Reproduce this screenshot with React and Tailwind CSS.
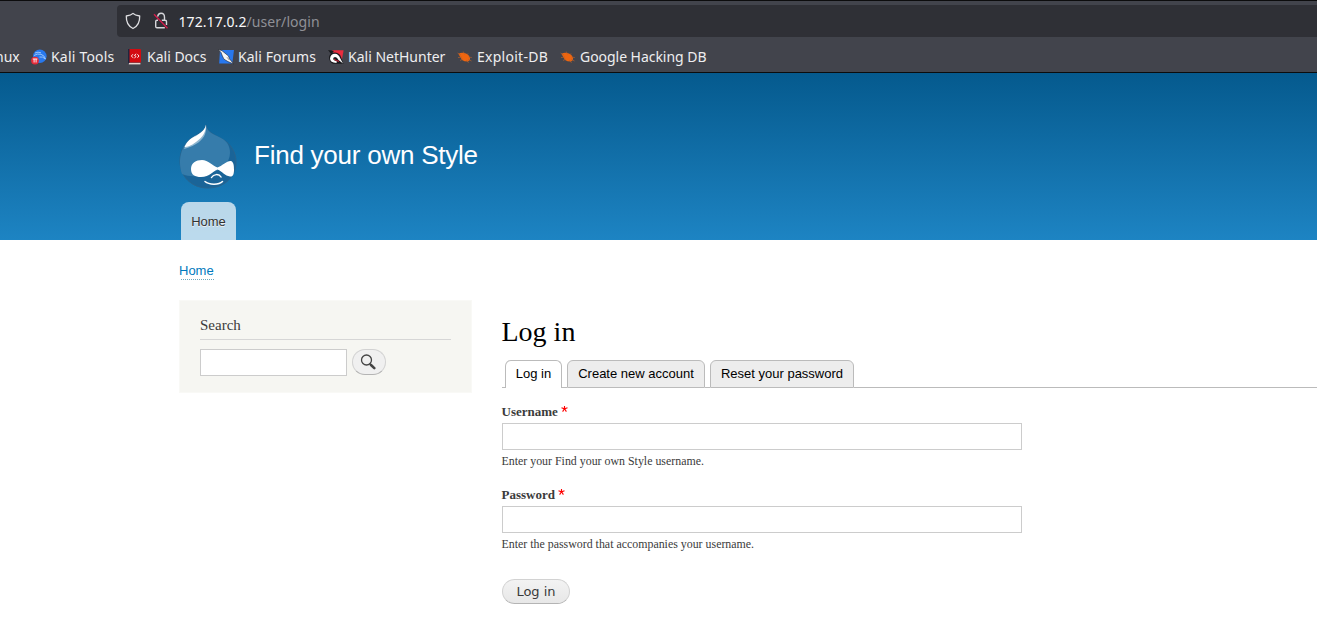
import React from "react";

function ShieldIcon() {
  return (
    <svg className="h-[18px] w-[16px]" viewBox="0 0 16 18" fill="none" stroke="#dfdfe2" strokeWidth="1.3" strokeLinejoin="round">
      <path d="M8 1.4 C6.4 3 3.7 3.6 1.3 4 C1.1 10 3.1 14.2 8 16.5 C12.9 14.2 14.9 10 14.7 4 C12.3 3.6 9.6 3 8 1.4Z" />
    </svg>
  );
}

function InsecureIcon() {
  return (
    <svg className="h-[18px] w-[16px]" viewBox="0 0 16 18" fill="none" strokeWidth="1.4">
      <path d="M4.6 4.6 C5 2.3 6.2 1.3 8 1.3 C10.3 1.3 11.5 2.7 11.5 5.3 V8.2 M8.8 8.2 H12.2 Q13.5 8.2 13.5 9.5 V13 M11.8 15.8 H4 Q2.7 15.8 2.7 14.5 V9.5 Q2.7 8.2 4 8.2 H5" stroke="#d6d6da" />
      <path d="M1 2.3 L14.5 16.3" stroke="#d81c4c" strokeWidth="1.3" />
    </svg>
  );
}

function ToolsIcon() {
  return (
    <svg className="h-4 w-4 shrink-0" viewBox="0 0 16 16">
      <circle cx="8.8" cy="7.3" r="6.8" fill="#2878ec" />
      <path d="M3 6.5 Q6 4.3 10 5.3 Q13.5 6.5 14.5 10 Q11.5 7.2 8.5 8 M4 4 Q7 2.5 10 3.8" fill="none" stroke="#a5ccfb" strokeWidth=".9" />
      <circle cx="4" cy="11.6" r="3.9" fill="#e52a38" />
      <path d="M1.8 10 H6.4 M3.1 10 V13.5 M5.1 10 V13.5" stroke="#fff" strokeWidth=".9" />
    </svg>
  );
}

function DocsIcon() {
  return (
    <svg className="h-4 w-4 shrink-0" viewBox="0 0 16 16">
      <path d="M1 0 H3 V15 H1Z" fill="#20263e" />
      <path d="M2.5 0 H13 Q14 0 14 1 V13.6 H2.5Z" fill="#d30b10" />
      <path d="M1.8 13.9 H13.4 V15.4 H1.8Z" fill="#e7d7d2" />
      <path d="M6 5.2 L4.4 7 L6 8.8 M10.4 5.2 L12 7 L10.4 8.8 M9.2 4.8 L7.4 6.4 L9 7.4 L7.4 9.3" fill="none" stroke="#fff" strokeWidth=".9" />
    </svg>
  );
}

function ForumsIcon() {
  return (
    <svg className="h-4 w-4 shrink-0" viewBox="0 0 16 16">
      <path d="M2 1 H16 L14.3 14.5 H1.2Z" fill="#2878ee" />
      <path d="M0 .3 L4 1.7 L8 5 L10.5 7 L11.4 9.7 L15.7 15 L10 12.6 L6 10.2 L4.4 7 L3 3.5Z" fill="#f7f7f7" stroke="#20242c" strokeWidth=".6" />
      <path d="M9 8.3 L11.5 11.2" stroke="#555" strokeWidth=".6" />
    </svg>
  );
}

function NetHunterIcon() {
  return (
    <svg className="h-4 w-4 shrink-0" viewBox="0 0 16 16">
      <path d="M4 1.2 H15.6 L13.6 12.5 L8 9Z" fill="#e92c3e" />
      <path d="M0 1 L6 2 L3 5Z M1 8 Q2 3.5 7 3.5 Q12 4 13 8 L15.5 14.8 H5 Q1 13 1 8Z" fill="#191a1e" />
      <path d="M8.5 14 Q2 13.6 2 9.5 Q2.5 5 7 4.8 Q10.5 5 12.2 9.3 L15 14.5 L10.5 11 Q9 8 7 8 Q4.8 8.3 5.2 10.3 Q5.8 12 8.8 12.3Z" fill="#fff" />
      <path d="M6 10 Q8 12 11 12.3" fill="none" stroke="#d92439" strokeWidth="1" />
    </svg>
  );
}

function BugIcon() {
  return (
    <svg className="h-4 w-4 shrink-0" viewBox="0 0 16 16">
      <path d="M1.5 5 Q4 3 7.5 4 L9.5 4.8 L11.7 6.5 Q13.5 8.5 12.8 11 L11 12.5 Q7.5 12.6 5 10.9 L3.7 8.8Z" fill="#ee650f" />
      <path d="M.6 4 L4 6 M1 8.6 L5 8 M3 11.5 L6 10 M6.3 2.6 L7.5 5.4 M11 4.4 L10.5 6 M14.8 8.6 L11.5 8 M14.5 12 L11 10 M11.5 13.8 L9.5 11" stroke="#b5602c" strokeWidth=".7" />
    </svg>
  );
}

function Bookmark({ icon: Icon, className, children }) {
  return (
    <div className={`flex shrink-0 items-center ${className}`}>
      <Icon />
      <span className="ml-1 whitespace-nowrap">{children}</span>
    </div>
  );
}

function DropLogo() {
  return (
    <svg className="h-[66px] w-[58px]" viewBox="0 0 58 66">
      <path d="M27 1 C28 8 34 10 43 15 C52 20 57 28 57 38 C57 53 45 64 29 64 C12 64 1 52 1 37 C1 25 7 17 16 12 C23 8 26 6 27 1Z" fill="#1a6498" stroke="#29648e" strokeWidth="1" />
      <path d="M27 1 C28 8 34 10 42 14 C48 17 51 22 51 29 C51 38 43 46 34 48 C26 52 12 54 3 50 C-1 39 1 26 8 18 C15 12 25 9 27 1Z" fill="#367cab" />
      <path d="M27 1 C28 10 24 16 17 20 C12 23 8 24 5 25 C8 17 13 13 18 11 C23 8 26 6 27 1Z" fill="#8eb6d0" />
      <path d="M27 .5 C27 8 24 13 17 18 C12 22 8 23 5.5 23 C8 17 12 14 17 12 C23 8 26 6 27 .5Z" fill="#fff" />
      <path d="M12 45 C12 39 17 36 23 36 C29 36 34 42 38.5 43.5 C43 42 48 36.5 52 37 C55 38 55 43 55 46 C55 50 54 53 51 52.5 C46 52 43 47 38.5 45.5 C34 47 31 53 22 53 C16 53 12 51 12 45Z" fill="#fff" />
      <path d="M32.5 53.5 C34.5 50 40 49.5 42 53 M26 57.5 C30 61 40 61 43.5 57.5" fill="none" stroke="#fff" strokeWidth="1.5" strokeLinecap="round" />
    </svg>
  );
}

function SearchIcon() {
  return (
    <svg className="mr-[2px] mb-px h-4 w-4" viewBox="0 0 16 16" fill="none" stroke="#444">
      <circle cx="6.5" cy="6" r="5" strokeWidth="1.3" />
      <path d="M9.7 9.7 L11 11" strokeWidth="1.5" />
      <path d="M11 11 L14.3 14.1" strokeWidth="2.6" strokeLinecap="round" />
    </svg>
  );
}

function Field({ id, label, type, help, className }) {
  return (
    <div className={className}>
      <label htmlFor={id} className="-ml-[0.5px] flex h-4 text-[13px] leading-4 font-bold text-[#3b3b3b]">
        {label}
        <svg className="mt-[2px] ml-[3.5px] h-[6px] w-[7px]" viewBox="0 0 7 6" stroke="#f00" strokeWidth="1.1">
          <path d="M3.5 0 V3.3 M.5 1.8 L3.5 2.8 L6.5 1.8 M1.6 5.6 L3.5 2.8 L5.4 5.6" fill="none" />
        </svg>
      </label>
      <input id={id} type={type} className="mt-[3px] block h-[27px] w-[520px] border border-[#ccc] bg-white px-1 outline-none" />
      <div className="mt-[3px] -ml-[0.5px] h-4 text-[11.9px] leading-4 whitespace-nowrap text-[#3b3b3b]">{help}</div>
    </div>
  );
}

export default function App() {
  return (
    <div className="h-[633px] w-[1317px] overflow-hidden bg-white font-['Liberation_Serif',serif]">
      <div className="flex h-[73px] flex-col border-t border-b border-t-[#0c0c0d] border-b-[#0c0c0d] bg-[#42444c] font-['Noto_Sans',sans-serif]">
        <div className="ml-[117px] mt-1 flex h-8 shrink-0 items-center rounded-l-[4px] bg-[#2f3036] pl-2">
          <ShieldIcon />
          <span className="ml-3 flex"><InsecureIcon /></span>
          <span className="mt-px ml-[9.5px] text-[14px] leading-5 tracking-[0.07px] whitespace-nowrap text-[#8f9096]"><span className="text-[#f9f9fa]">172.17.0.2</span>/user/login</span>
        </div>
        <nav className="mt-[10px] flex h-5 items-center text-[14px] leading-5 text-[#eeeef0]">
          <span className="-ml-[5px] w-[36px] shrink-0">nux</span>
          <Bookmark icon={ToolsIcon} className="w-[96px] tracking-[0.2px]">Kali Tools</Bookmark>
          <Bookmark icon={DocsIcon} className="w-[91px]">Kali Docs</Bookmark>
          <Bookmark icon={ForumsIcon} className="w-[110px] tracking-[0.05px]">Kali Forums</Bookmark>
          <Bookmark icon={NetHunterIcon} className="w-[129px]">Kali NetHunter</Bookmark>
          <Bookmark icon={BugIcon} className="w-[103px] tracking-[0.27px]">Exploit-DB</Bookmark>
          <Bookmark icon={BugIcon} className="w-[150px] tracking-[-0.04px]">Google Hacking DB</Bookmark>
        </nav>
      </div>
      <header className="flex h-[167px] flex-col bg-linear-to-b from-[#055a8e] to-[#1d84c3] pl-[179px] font-['Liberation_Sans',sans-serif]">
        <div className="flex h-[129px] shrink-0 items-start pt-[51px]">
          <DropLogo />
          <h1 className="mt-4 ml-[17px] text-[26px] leading-[30px] tracking-[-0.24px] whitespace-nowrap text-[#fffeff]">Find your own Style</h1>
        </div>
        <a className="ml-[2px] flex h-[38px] w-[55px] items-center justify-center rounded-t-[8px] bg-white/70 pt-px text-[13px] text-[#333] [text-shadow:0_1px_#eee]">Home</a>
      </header>
      <nav className="flex h-[60px] pt-[22px] pl-[179px] font-['Liberation_Sans',sans-serif]">
        <a className="flex h-[18px] flex-col text-[13px] leading-[17px] text-[#0079bd]">
          Home
          <span className="ml-[2px] block border-b border-dotted border-[#6fa9bd]" />
        </a>
      </nav>
      <div className="flex">
        <aside className="ml-[179px] h-[93px] w-[293px] shrink-0 border border-[#f9f9f6] bg-[#f6f6f2] px-5 pt-[15px]">
          <h2 className="h-6 border-b border-[#d6d6d6] text-[15px] leading-[18px] text-[#3b3b3b]">Search</h2>
          <div className="mt-[9px] flex">
            <input type="search" className="h-[27px] w-[147px] border border-[#ccc] bg-white outline-none" />
            <button className="ml-[5px] flex h-[26px] w-[34px] items-center justify-center rounded-full border border-[#d2d2d2] border-b-[#b4b4b4] bg-[#f0f0f0]"><SearchIcon /></button>
          </div>
        </aside>
        <main className="ml-[30px] min-w-0 flex-1 pt-[15px]">
          <h1 className="-ml-[0.5px] h-[34px] text-[28px] leading-[34px] text-black">Log in</h1>
          <div className="mt-[11px] flex h-7 items-end font-['Liberation_Sans',sans-serif] text-[13px] text-black">
            <div className="h-7 w-[3px] shrink-0 border-b border-[#bbb]" />
            <a className="flex h-7 w-[57px] shrink-0 items-center justify-center rounded-t-[6px] border border-b-0 border-[#bbb] pb-px">Log in</a>
            <div className="h-7 w-[5px] shrink-0 border-b border-[#bbb]" />
            <a className="flex h-7 w-[138px] shrink-0 items-center justify-center rounded-t-[6px] border border-[#bbb] bg-[#ededed] whitespace-nowrap">Create new account</a>
            <div className="h-7 w-[5px] shrink-0 border-b border-[#bbb]" />
            <a className="flex h-7 w-[144px] shrink-0 items-center justify-center rounded-t-[6px] border border-[#bbb] bg-[#ededed] whitespace-nowrap">Reset your password</a>
            <div className="h-7 flex-1 border-b border-[#bbb]" />
          </div>
          <Field id="username" label="Username" type="text" help="Enter your Find your own Style username." className="mt-4" />
          <Field id="password" label="Password" type="password" help="Enter the password that accompanies your username." className="mt-[18px]" />
          <button className="mt-[27px] flex h-[25px] w-[68px] items-center justify-center rounded-full border border-[#d2d2d2] border-b-[#b4b4b4] bg-linear-to-b from-[#f3f3f3] to-[#e7e7e7] font-['DejaVu_Sans',sans-serif] text-[13px] text-[#3a3a3a]">Log in</button>
        </main>
      </div>
    </div>
  );
}
